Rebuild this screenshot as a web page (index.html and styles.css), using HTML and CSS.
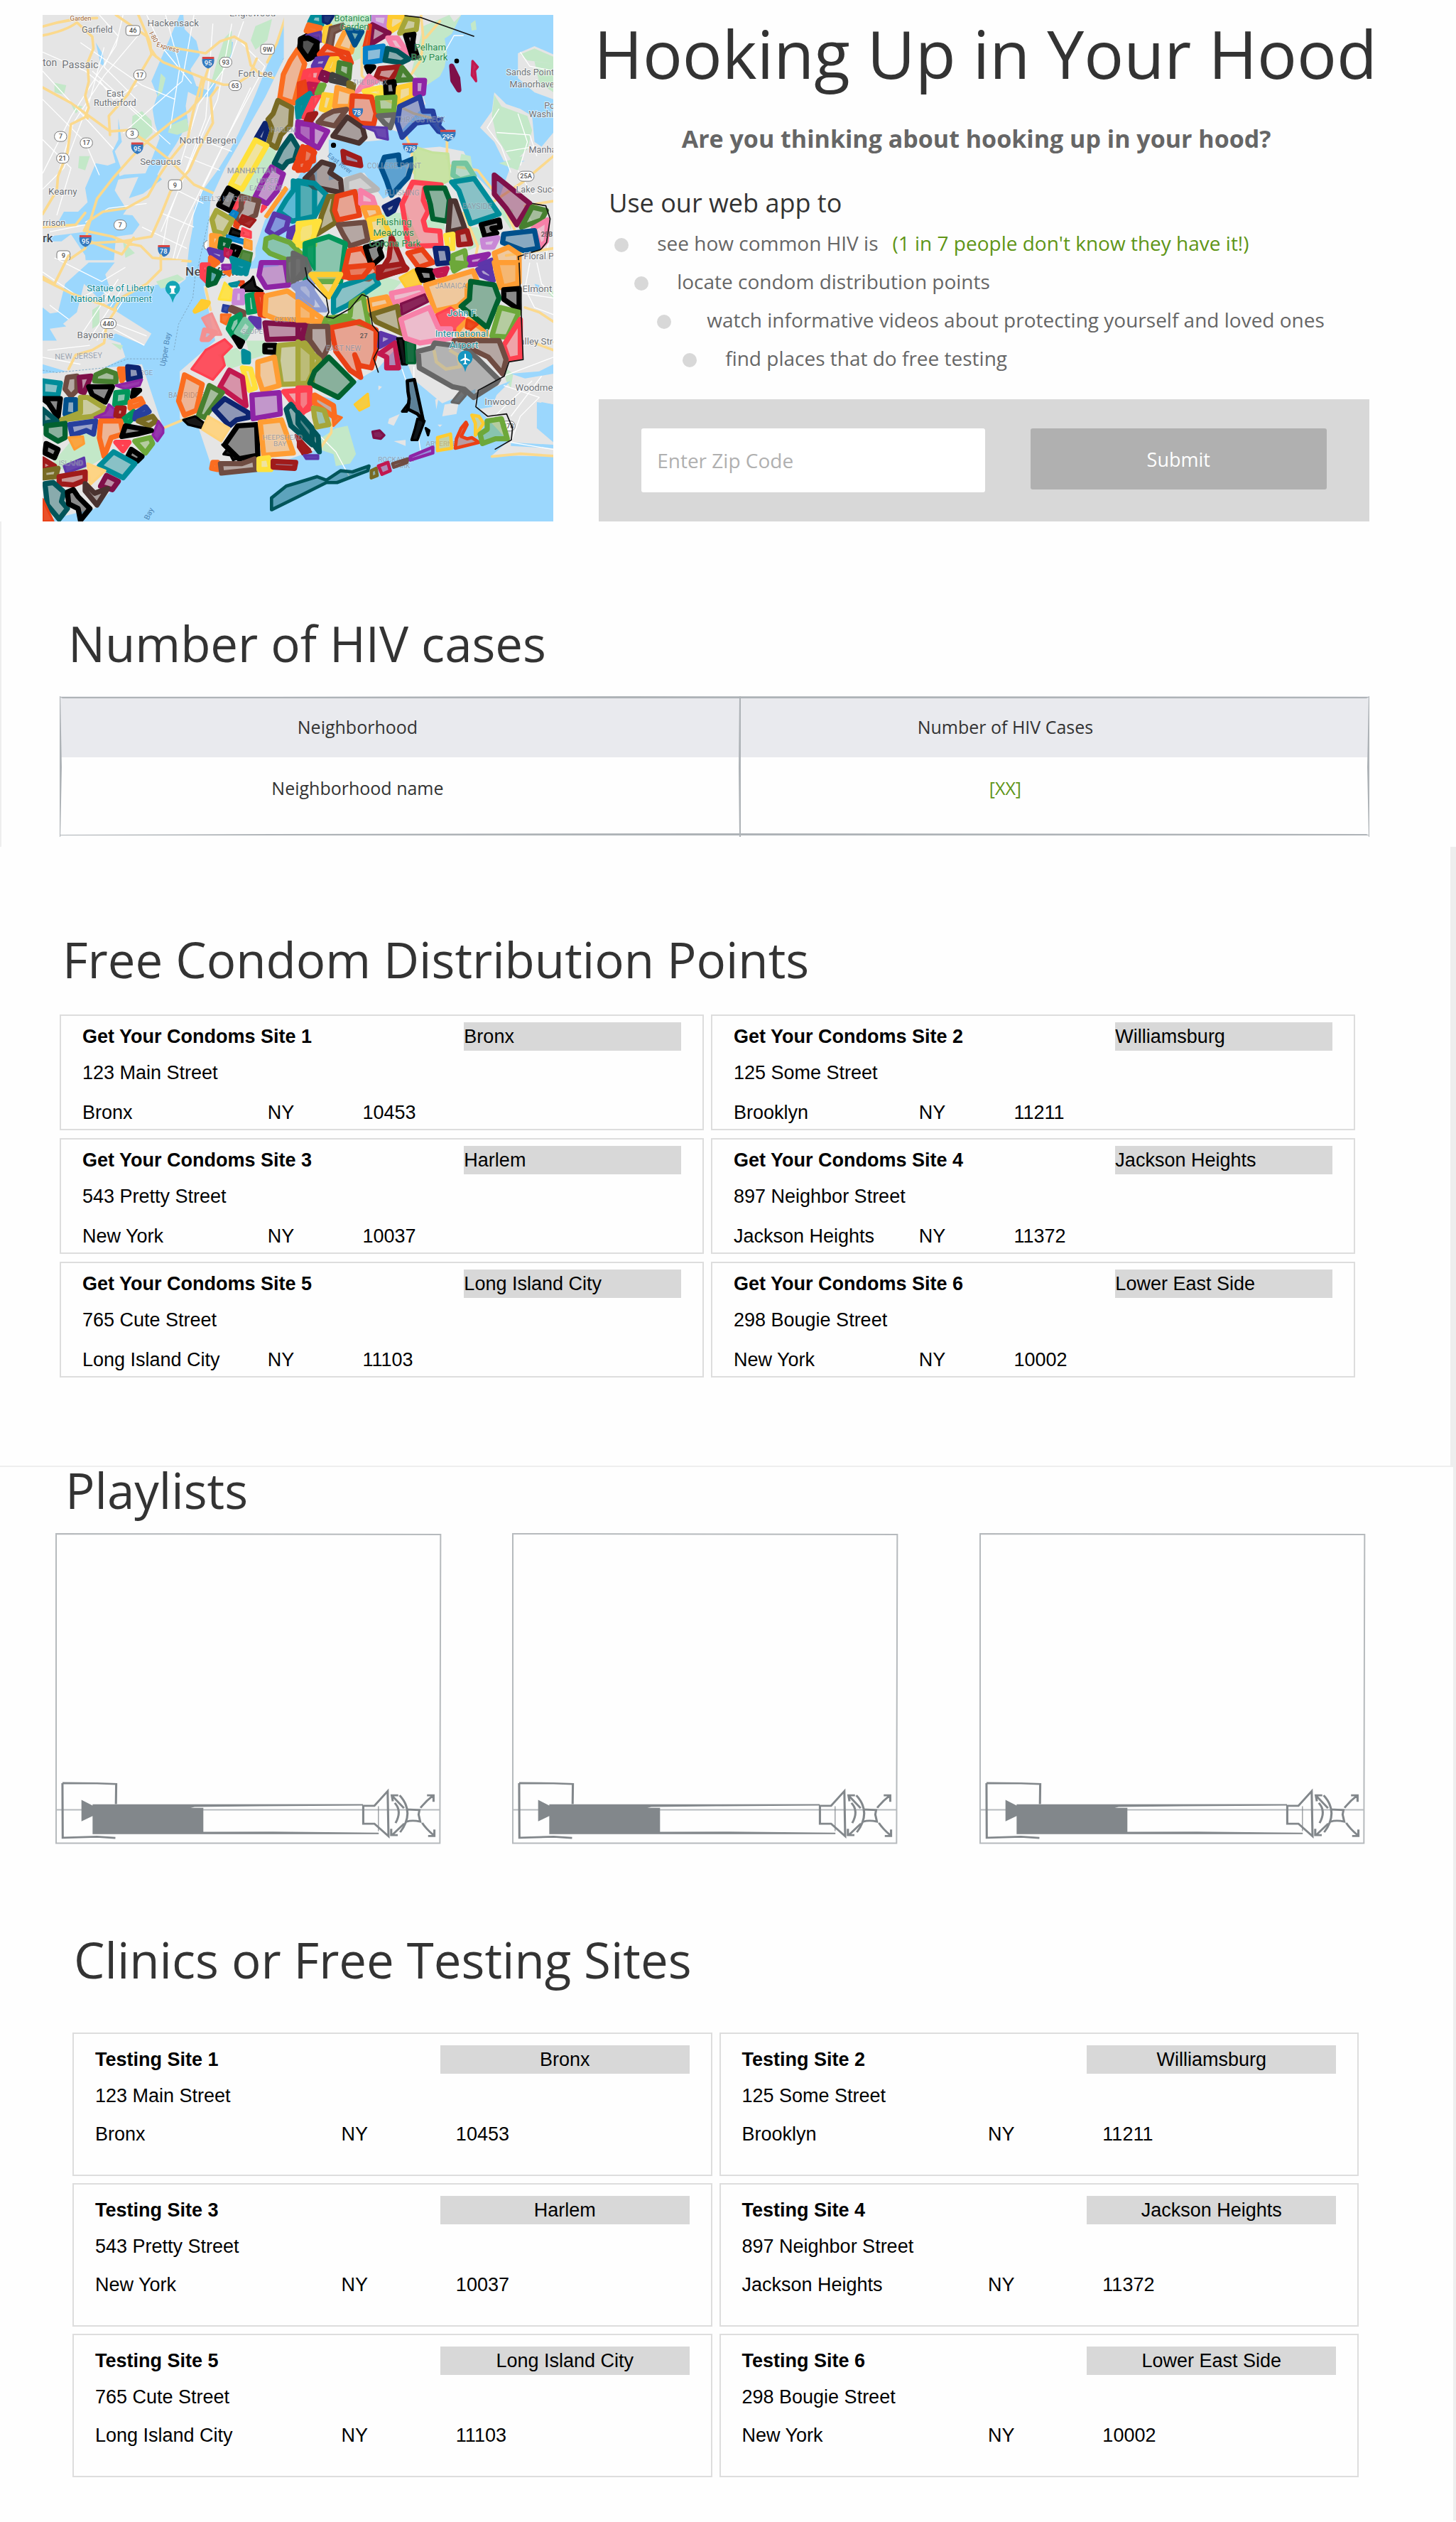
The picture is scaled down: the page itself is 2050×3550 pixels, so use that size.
FILE: index.html
```
<!DOCTYPE html>
<html lang="en">
<head>
<meta charset="utf-8">
<meta name="viewport" content="width=device-width, initial-scale=1">
<title>Hooking Up in Your Hood</title>
<link rel="stylesheet" href="styles.css">
</head>
<body>
<header class="hero">
<svg class="map" viewBox="0 0 2160 2142" role="img" aria-label="Map of New York City neighborhoods">
<rect class="water" width="2160" height="2142"/>
<!-- New Jersey, west -->
<g transform="translate(-60 -63)">
<path class="land" d="M60 63H1090L1040 200 1000 300 960 400 930 470 890 560 850 640 800 720 740 800 700 880 695 960 680 1040 665 1180 640 1200H60z"/>
<path class="water" d="M640 63h15l5 60 50 50 15 60-40 60 25 70 50 20 30-80 50-70 10-60 15 5-5 60-55 80-30 90-50 5-50-25-10 60 10 70-50 90-60 90-20 40 20 20-80 60-60 20 40-90-80 10-60 20 10-15 70-25 90-5 30-70 30-80-20-60-10-60 20-60-25-60zM285 690l50 10 40-15 10 60-20 60 50 80-40 60-60 5-60 0-90 0-40-10 25-45 60 0 40-40-10-60zM250 920l60-20 130 10 30 40-30 40-70 10-10 120-60 100-50-30-10-110-60-90-40 30-80 0 20-20 80-10 80-10zM285 180l30 50 5 50-15-10zM380 500l15 100-30 40 30 80-15 10-25-90 25-50z"/>
<path class="park" d="M440 490l40-20 40 40 5 50-40 40-50-30zM600 530l70-30 10 50-50 20-40-10zM800 250l30-90 30-30 0 90-40 90-50 50zM560 310l20 20-15 60-20 20zM960 110l70-30-20 90-50 40-20-40zM215 660l45 0-20 60-30-10zM110 350l50 10-10 40-40-10zM400 1020l50 50-40 20zM180 440l50 10-30 30z"/>
<path class="street" d="M60 220l180 80 160 130 200 180M60 300l300 330M60 420l180 180 60 140M300 63l80 90-60 130 140 140M400 63l-30 130-190 300-120 240M500 63l60 130 130 160M580 63l60 220-40 260M700 63l-50 280-250 220M780 100l-30 400-160 420-40 220M860 100l-60 320-130 300-110 260M900 180l100 100-160 300-200 400-40 160M940 370l-200 420-130 350M60 590l120 120-60 200M60 800l90-90 110-290 60-220M130 720l60-200 130-200 160-190M270 300l210 190M220 180l260 180 140 60M700 580l160 60M660 660l150 60M620 800l120 60M560 900l140 60M480 960l190 90M300 340l60 80 100-60M90 980l150-30M240 940l100-60 160-20M640 700l80-260 130-180 60-170"/>
<path class="road" d="M60 112q110-35 230-36M60 150q100-20 145-55l65 60 5 50-25 60 5 80-15 60 15 50-15 40-60 30-15 120-40 100-5 60-60 100M60 370l120 65 165 120 80-5 75 50 90 70 110 110 90 40 30 30M345 570l-5-80 80-90 100-170-5-50-60-140M370 63l130 90 20 70 50 40 165 65 90 30 50 0 60-40 30-70M600 200l150 25 60-50 60-20 50 30 20 90 30 30 95 35M760 290l-20 60-10 60-50 60-80 50-100 80-60 60-80 90-70 90-40 130-10 80-100 70-60 80M735 330l-40 150-20 100-80 100-40 60-50 90-90 50-100 15-60 40-20 40 120 25 70 30 50 10 50 50 160 15M800 370l-30 40 10 110-60 110-40 90-80 90-40 100-40 90-120 20-170 10M235 1010l160 65 50-70M60 960l140-10 40-50M1090 63l-40 120-40 80M565 1040l-10 100M240 480l10 20M520 210l20 30"/>
<text class="label" x="503" y="110" font-size="40">Hackensack</text><text class="label" x="225" y="137" font-size="38">Garfield</text><text class="label" x="850" y="68" font-size="40">Englewood</text><text class="road-name" x="176" y="88" font-size="28">Garden</text><text class="road-name" font-size="28" transform="translate(510 140) rotate(62)">I-80 </text><text class="road-name" font-size="28" transform="translate(540 196) rotate(16)">Express</text>
<text class="label" x="60" y="278" font-size="42">ton</text><text class="label" x="142" y="287" font-size="44">Passaic</text><text class="label" x="887" y="323" font-size="40">Fort Lee</text><text class="label" x="330" y="408" font-size="38">East</text><text class="label" x="276" y="446" font-size="38">Rutherford</text><text class="label" x="638" y="608" font-size="41">North Bergen</text><text class="label" x="472" y="696" font-size="40">Secaucus</text><text class="label" x="84" y="824" font-size="40">Kearny</text><text class="label" x="60" y="955" font-size="38">rrison</text><text class="city" x="60" y="1024" font-size="50">rk</text>
<g class="shield"><rect x="412" y="108" width="60" height="42" rx="12"/><rect x="982" y="187" width="58" height="42" rx="12"/><rect x="808" y="242" width="52" height="42" rx="20"/><rect x="445" y="296" width="52" height="42" rx="20"/><rect x="848" y="341" width="52" height="42" rx="20"/><rect x="413" y="544" width="52" height="42" rx="20"/><rect x="110" y="556" width="52" height="42" rx="20"/><rect x="219" y="583" width="52" height="42" rx="20"/><rect x="119" y="648" width="52" height="42" rx="20"/><rect x="592" y="760" width="56" height="44" rx="12"/><rect x="362" y="930" width="52" height="42" rx="20"/><rect x="120" y="1060" width="56" height="42" rx="12"/><rect x="342" y="1104" width="66" height="42" rx="20"/><rect x="1088" y="242" width="52" height="42" rx="20"/><rect x="986" y="465" width="52" height="42" rx="20"/><rect x="742" y="1016" width="50" height="42" rx="20"/></g>
<g class="shield-text"><text x="442" y="139">46</text><text x="1011" y="218">9W</text><text x="834" y="273">93</text><text x="471" y="327">17</text><text x="874" y="372">63</text><text x="439" y="575">3</text><text x="136" y="587">7</text><text x="245" y="614">17</text><text x="144" y="679">21</text><text x="620" y="792">9</text><text x="388" y="961">7</text><text x="148" y="1091">9</text><text x="375" y="1135">440</text><text x="1114" y="273">9A</text><text x="1012" y="496">9A</text></g>
<g class="interstate"><path d="M735 248h50q5 30-25 42-30-12-25-42zM435 609h50q5 32-25 43-30-12-25-43zM216 1001h50q5 32-25 43-30-12-25-43zM548 1043h50q5 32-25 43-30-12-25-43z"/></g>
<g class="interstate-top"><path d="M735 240h50v9h-50zM435 602h50v9h-50zM216 994h50v9h-50zM548 1036h50v9h-50z"/></g>
<g class="interstate-text"><text x="760" y="276">95</text><text x="460" y="639">95</text><text x="241" y="1029">95</text><text x="571" y="1071">78</text></g>
<path class="ferry" d="M1150 63L960 560 780 850 710 1160"/>
<path class="land" d="M1170 63h100v700l-240 190-80 150-180 40-15-100 15-200 60-130 170-300z"/>
<path class="park" d="M1000 640l40-30 10 60-20 40-90 130-60-30z"/>
<path class="water" d="M1200 640l-60 110-140 180-40 120 0 110h260V640z"/>
</g>
<!-- Bronx, Queens and Long Island, base layer -->
<g transform="translate(1080 -63)">
<path class="land" d="M-60 63H640L600 120 560 160 540 200 600 250 540 300 520 380 540 440 430 560 370 540 380 590 270 600 130 590 20 500-60 500z"/>
<path class="park" d="M530 110l110-47h50l-40 80-30 20 10 60-10 60-20 40-60 40-60-60 20-80zM730 100l20-15 5 40-20 5zM230 63h80l-20 170-60 30zM120 63h100v60H90z"/>
<path class="land" d="M830 390l50 50 60 20 50 30 10 110 30 20 50-60V1150H0V790L280 730 360 840 440 800 480 630 600 620 700 640 760 750 850 840 900 700 960 680 870 680 830 600 770 540 820 470zM930 225l70-30 80 35V420l-80-30-70-60zM640 63l50 0-30 30z"/>
<path class="park" d="M830 400l30 50 110 40 20 60-20 80-60 60-70-110-20-90zM940 230l60-25 80 35v30l-110-15zM1000 260l80 10v120l-60-40zM850 690l100-30-20 60zM690 650l40 10 10 70-60-30zM540 930l80-10 0 50-80 0zM700 960l60 0 40 60-80 40zM850 850l60 40-10 80-40-60zM330 900l130 0 60 130-150 30z"/>
<path class="street" d="M940 220l40 60 100 20M850 460l-50 80 60 80 40 110M840 560l140 10 30 90M930 480l40 120-30 100M880 640l120-20M620 220l40-70 40 0M930 720l60 100 90-30M960 900l100 120-20 120"/>
<path class="road" d="M520 63l10 100-10 90-40 60M270 200v120l100 100 120 60 80 20 60 80 0 90M450 560l30 70 10 100M600 90l-60 70M640 700l120 20 100 130 60 130M830 850l120-80 130-110M960 870l120-20M700 900l60 140-20 100M1080 1050l-200 30"/>
</g>
<!-- Staten Island, New Jersey shore and Brooklyn, base layer -->
<g transform="translate(-60 1047)">
<path class="land" d="M60-10H650L600 50 560 90 430 120 330 180 520 300 490 350 370 300 330 320 390 340 410 400 310 450 160 460 60 430V330l60 0-30-50 70-10-100-80zM60 470L480 430 570 700 400 910 280 1040 60 1094zM640 460L790 330 740 100 900 30 1220 0V790L960 880 780 880 720 700 640 660z"/>
<path class="water" d="M255 0h110l-40 50 20 60-50 40-60-60-30 120-60 50-80-40 60-10 30-120z"/>
<path class="park" d="M540 80l90-30 30 20-60 30-40 10zM270 200l30-20 0 80-30 20zM350 340l50 10-10 20zM200 730l90-20 20 120-120 70-90-50zM800 390l80-30 60 60-90 30zM920 330l80 0 0 60-60 20z"/>
<path class="street" d="M60 40l160 110 80-40 80 60M110-20l200 100 100-60M260 320l150-230M220 310l160-240M290 330l130-200M360 280l130 70M370 260l130 50M90 180l80 60M80 370l180-20M60 400l160 30"/>
<path class="road" d="M60 60l50 30 60-120M60 70l120 60 140 50 40 20 30-50 110-60 60-60 0-60M370 200l-40 60-10 80-50 30-70 20-30 60M570 700l120-50 60-100M750 110l20 90"/>
<path class="ferry" d="M60 455l60 10 200-20 100-38h150M705 60l-10 90-60 110-20 110"/>
<text class="place" x="247" y="121" font-size="39">Statue of Liberty</text><text class="place" x="178" y="166" font-size="39">National Monument</text>
<path class="place-pin" d="M610 170q-8-30-24-42a31 31 0 1 1 48 0q-16 12-24 42z"/><path class="pin-glyph" d="M597 98h26v8l-6 4v16l8 6h-30l8-6v-16l-6-4z"/>
<text class="label" x="206" y="319" font-size="40">Bayonne</text><text class="area" x="112" y="410" font-size="34" transform="rotate(-2 112 410)">NEW JERSEY</text><text class="area" x="470" y="475" font-size="30">RGE</text><text class="area" x="592" y="573" font-size="31">BAY RIDGE</text>
<text class="sea" font-size="32" transform="translate(577 440) rotate(-80)">Upper Bay</text><text class="sea" font-size="32" transform="translate(508 1090) rotate(-65)">Bay</text>
<g class="shield"><rect x="305" y="237" width="66" height="42" rx="20"/></g><g class="shield-text"><text x="338" y="268">440</text></g>
<text class="city" x="664" y="56" font-size="52">New York</text>
</g>
<!-- Jamaica Bay and Nassau, base layer -->
<g transform="translate(1080 1047)">
<path class="land" d="M-80-20H1080V600l-70-10 0 110 70 60v60L820 815l70-60-140-150 0-70-140 60-120-100-60-150-90 100-120 70-80 60-80-20-40 80-60 60-80-20z"/>
<path class="land" d="M340 520l15 5-15 15zM385 660l45-20-25 50-25-10zM620 600l60-10-10 50-60 10zM580 580l15-10-10 50zM405 755l50-5 0 25zM590 685l20 0-10 10zM440 750l40-10"/>
<path class="park" d="M100 740l60-40 50-10 35 120-25 40-60 10-10-50-60-20zM870 440l40 30-10 60-20-30zM280 110l80-50 80 20-60 60-90 10zM1040 110l40 10v30z"/>
<path class="water" d="M1080 430l-60 30-120 10 60 20 120-20zM900 500l-60 60-20 50-60 10-10-60zM1080 600l-50-10-20 40 30 40 0-50 40 0zM900 760l180 10v15l-180-10zM1000 90l20 5 0 40z"/>
<path class="street" d="M980 0l-20 110 40 80 80 30M950 130l130 20M1010 0l20 90 50 50M870 480l210-80M870 520l150 50-80 80-40 110 180 30M990 500l-170 160M1030 480l-130 170M80 720l80 80 60 110M440 450l20 60M490 440v60M510 740l10 70"/>
<path class="road" d="M960 190l60 20 60 40M1000 340l80 30M90 790l50-70 10-110M820 820l120-12 140 10"/>
<text class="label" x="949" y="123" font-size="40">Elmont</text><text class="label" x="936" y="347" font-size="40">alley Stream</text><text class="label" x="919" y="543" font-size="40">Woodmere</text><text class="label" x="789" y="602" font-size="40">Inwood</text>
<g class="shield"><rect x="860" y="670" width="58" height="42" rx="20"/></g><g class="shield-text"><text x="889" y="701">878</text></g>
<text class="area" x="338" y="841" font-size="30">ROCKAWAY</text><text class="area" x="400" y="869" font-size="30">PARK</text><text class="area" x="540" y="777" font-size="30">ARVERNE</text>
</g>
<!-- Neighborhood zones, Manhattan -->
<g class="zones" transform="translate(-60 -63)">
<path class="orange solid" d="M1180 110l40 0 0 50-45-15z"/>
<path class="black" d="M1150 165l30-15 40 10v70l-30 18-35-25-5-25z"/>
<path class="orange" d="M1138 210l30 60-20 70-25 95-60-20 15-100 30-60z"/>
<path class="redorange solid" d="M1135 440l10-60 20-50 30 10 10 50-30 50z"/><path class="red solid" d="M1165 300l35-10v60l-45-10z"/><path class="teal solid" d="M1130 450l50-30 25-30v100l-70 10z"/><path class="red solid" d="M1160 500l40-90v100z"/>
<path class="olive" d="M1055 425l58 30-5 75-40 40-20 55-32-20 15-60-18-40 22-25z"/>
<path class="navy" d="M1000 522l-35 60 28 18 15-50z"/>
<path class="darkteal" d="M1110 575l30 50-15 50-30 10-20 25-35-20 30-60z"/>
<path class="purple" d="M1140 515l60 10v90l-40-30-25-20z"/>
<path class="redorange" d="M1165 625l40-5v60l-30 10-10 30-40-10 10-25 25-5z"/>
<path class="yellow" d="M960 592l48 24-105 184-48-20z"/>
<path class="purple" d="M1028 706l50 30-25 70-45 55-50-28 35-70z"/>
<path class="black" d="M845 795l40 22-30 75-50-25z"/><path class="red solid" d="M890 835l25 10-20 50-28-10z"/><path class="brown" d="M900 830l75 20-15 60-80 40 0-40 20-30z"/><path class="skyblue solid" d="M865 890l20 10-10 20-25-10z"/><path class="darkred solid" d="M905 910l55 20-25 30-45-20z"/><path class="red solid" d="M990 870l15 5-20 20z"/>
<path class="khaki" d="M795 890l68 40-35 60-40-12-12-50z"/><path class="amber solid" d="M1086 792l8 8-85 118-8-4z"/>
<path class="redorange solid" d="M875 935l15 15-5 15-15-10z"/><path class="black solid" d="M860 965l50 20-20 15-40-10z"/><path class="red solid" d="M905 965l35 15 0 25-40-10z"/><path class="skyblue solid" d="M840 995l70 20 0 15-70-20z"/><path class="amber" d="M775 995l35 5-20 45-15-5z"/><path class="darkgreen" d="M815 1010l35 10-15 35-25-10z"/><path class="black" d="M865 1040l30 10-15 30-20-10z"/><path class="amber solid" d="M915 1010l28 10 0 35-30-10z"/><path class="forest solid" d="M905 1060l40 10-8 42-45-15z"/><path class="indigo" d="M765 1055l60 15-10 30-40-20z"/><path class="crimson solid" d="M830 1050l30 10-10 30-20-10z"/><path class="orange" d="M770 1090l30 20-20 15-10-10z"/><path class="teal" d="M860 1092l70 25-10 40-50-30z"/>
<path class="teal" d="M1120 765l90 20v130l-95 20-55-40 30-50 30-40z"/><path class="indigo" d="M1040 905l60 20-10 40-50 30-30-20z"/><path class="indigo" d="M1105 970l25-10-10 45-20-5z"/><path class="yellow" d="M1150 950l60-15v100l-60 5-25-20z"/>
<path class="green solid" d="M1170 1040l40-10v110l-40-60z"/><path class="lime" d="M1005 1010l30-10 70 25 50 50-60 25-75-30-20-20z"/><path class="brown" d="M1200 745l-25 15 30 20z"/>
</g>
<!-- Neighborhood zones, Bronx and Queens -->
<g class="zones" transform="translate(1080 -63)">
<path class="teal" d="M65 63l35 0 0 40-50-10z"/><path class="navy solid" d="M105 63h48l-25 40-22-10z"/><path class="orange" d="M45 105l50 12-15 28-45-15z"/><path class="indigo solid" d="M35 150l60-15 10 40-40 0z"/><path class="gold solid" d="M110 115l30-10-20 80-15-10z"/><path class="brown solid" d="M135 115l55-15-5 25-30 15-10 60-25-10z"/>
<path class="amber" d="M205 120l30 60-10 40-60-20z"/><path class="blue" d="M210 125l60 10-30 55z"/><path class="lavender" d="M315 63h65l-10 50-50-15z"/><path class="gold" d="M390 68l60 5-5 25-50 32-10-20z"/><path class="khaki" d="M460 75l45 10-5 40-70 15z"/>
<path class="maroon" d="M315 105l70 35-80 48z"/><path class="redorange solid" d="M300 105l8 0-10 90-20 0z"/><path class="pink" d="M380 160l40 0 45 65-60-20z"/><path class="black" d="M455 150l35-5-5 35 20 60-20 5z"/>
<path class="black" d="M12 165l30-5 40 20-40 70-35-50z"/><path class="redorange" d="M120 195l50 20 40 10 15 40-50-30-85-5z"/><path class="indigo" d="M80 250l45-5-15 35-45 0z"/><path class="gold" d="M140 250l25-2-20 55-25-10z"/><path class="forest" d="M175 265l45 10-5 55-45-25z"/><path class="skyblue" d="M285 205l75-10-5 60-70 10z"/><path class="darkteal" d="M378 205l40 10 50 35-30 15-70-10z"/>
<path class="red" d="M40 300l55-5-10 45-60-5z"/><path class="maroon" d="M105 305l25 10-10 25-25-10z"/><path class="charcoal" d="M145 315l60 25 0 15-65-15z"/><path class="crimson" d="M45 355l40 5-15 30-20-10z"/><path class="lime" d="M95 360l15 0-20 45-10-10z"/><path class="olive" d="M215 350l20 10-5 25-15-10z"/><path class="black" d="M290 283l30 0-20 22z"/><path class="darkred" d="M345 290l85-8-40 60-60-15z"/><path class="forest" d="M440 285l40 50-60 5z"/>
<path class="pink solid" d="M300 315l40 30-100 50 20-30z"/><path class="yellow" d="M280 385l70-15 10 40-70-10z"/><path class="black" d="M370 350l35-5 8 50-40 3z"/><path class="gold" d="M425 370l55-12 0 50-60 30z"/><path class="purple" d="M495 340l40 0-5 55-35 2z"/><path class="redorange solid" d="M0 350l30-10 10 60-40 40z"/>
<path class="teal" d="M0 430l50-35-30 80-20 10z"/><path class="red solid" d="M60 410l35-5-45 80-30 10z"/><path class="gold" d="M110 400l38 5-20 65-30-10z"/><path class="amber" d="M165 370l65 20-10 60-65 0z"/><path class="redorange" d="M230 405l80 5 20 70-10 45-60-5-35-40z"/><path class="lime" d="M335 415l75-5-5 60-65 0z"/><path class="gray" d="M340 490l70-5-20 55-25-20z"/>
<path class="brown" d="M110 490l40-20 55-8-50 70-70-15z"/><path class="darkred" d="M45 485l30-5-20 30-20 0z"/><path class="darkbrown" d="M208 495l65 45 10 40-25 25-110-30z"/><path class="purple" d="M0 520l65 10 60 25-40 70-85-50z"/><path class="indigo solid" d="M275 535l100 5 5 50-45-10-10-25z"/>
<path class="royal" d="M430 450l85-40 15 60 40 0 10 40-80 10-60 60-20-60z"/><path class="royal solid" d="M550 510l60-10-10 30 50 50-60-20z"/>
<path class="maroon" d="M650 280l25 50 5 50-25-40z"/><path class="crimson solid" d="M738 258l22 25-12 15 5 45-18-25z"/><circle class="black solid" cx="150" cy="614" r="6"/><circle class="black solid" cx="671" cy="258" r="5"/>
<path class="redorange" d="M20 620l50 25-30 70-40 5v-50z"/><path class="darkred" d="M190 640l70 30 5 30-70-15z"/><path class="silver" d="M205 760l60-20 70 60-40 10-90 0z"/><path class="darkbrown" d="M100 685l50 15-15 30 45 30 5 55-120-25-35-35z"/>
<path class="blue" d="M365 665l60-10 5 40 60-25-25 80-70 75-20-60-25-60z"/><path class="mint solid" d="M490 620l80 25 65 5 10 110-30 15-120-15z"/><path class="seafoam" d="M660 690l50 0 35 55-60 15-30-20z"/>
<path class="teal" d="M0 765l70 10 50 50-50 90-70 20z"/><path class="olive" d="M130 830l25 0-10 60 15 50-80 50 20-80z"/><path class="redorange" d="M165 830l75-20 20 100-90 20-15-40z"/><path class="pink" d="M265 805l50 30 10 30-60-5z"/><path class="amber" d="M275 878l60 0 10 30-50 20z"/><path class="gold" d="M300 930l55-12 30 65-70 25z"/><path class="navy" d="M365 875l60-30-20 45-25 15z"/>
<path class="red" d="M485 770l120 12-70 15-5 50 20 45-20 40 10 40 60 5 5 60-140 5-10-90-15-90z"/><path class="darkgreen" d="M540 795l80 0 20 50-10 90-60-10-10-60z"/><path class="darkbrown" d="M645 850l20 0 40 115-70 15z"/><path class="teal" d="M650 770l95-15 105 150-120 40-50-140z"/>
<path class="maroon" d="M830 740l150 120-55 90-45-70-50-60z"/><path class="forest" d="M990 875l60 15-20 40-85 30z"/><path class="pink" d="M1055 930l-5 90-25 25-30-80z"/><path class="blue" d="M870 990l130-15 15 75-60 10-90-35z"/><path class="black" d="M775 950l75-20 5 30-35 5 20 20-50 15z"/>
<path class="yellow" d="M0 945l90-10-30 80-60 20z"/><path class="brown" d="M170 950l110-10 15 75-75 25-30-50z"/><path class="darkred" d="M675 985l40-10 15 55-50 5z"/><path class="yellow" d="M625 995l30-5 0 60-20 0z"/><path class="lavender" d="M780 1015l65-10-20 40-40 0z"/>
<path class="green" d="M30 1030l100-30 70 30-10 80-10 80h-150z"/><path class="gray" d="M-20 1070l40 20 0 60-40 50z"/><path class="redorange" d="M215 1060l55-10 70 100-40 30-110-10z"/><path class="black" d="M285 1045l70-20-10 30 10 30-45 40z"/><path class="darkred" d="M395 1000l60 140-120 30 50-80z"/><path class="redorange" d="M465 1070l60-15 45 55-60 20z"/><path class="navy" d="M580 1050l50 0 10 60-50 5z"/><path class="lime" d="M655 1080l50-20 10 60-60 15z"/><path class="purple" d="M725 1090l80-15-40 40-40 5z"/><path class="indigo" d="M770 1120l50-20-10 50z"/><path class="amber" d="M830 1070l60-25 45 30 0 120-70 20z"/>
<path class="thin" d="M450 66l70 8 225 80M990 860l58 10 18 55-15 100-25 30-95 30 8 70"/>
</g>
<!-- Neighborhood zones, Staten Island and west Brooklyn -->
<g class="zones" transform="translate(-60 1047)">
<path class="teal" d="M60 500l75 10-10 50-65-5z"/><path class="brown" d="M165 485l40-5 0 60-25 25-25-30z"/><path class="maroon" d="M215 485l50-5-30 70-15-5z"/><path class="forest" d="M285 475l45-20 40 15 0 35-90-5z"/><path class="orange" d="M385 450l20 0 5 30-15 20z"/><path class="navy" d="M420 440l45 5 8 40-50 10z"/><path class="purple solid" d="M370 520l110-25-10 25-60 15z"/>
<path class="black" d="M255 525l100 0-30 65-55-30z"/><path class="green" d="M370 550l50-5-5 45-50 10z"/><path class="black" d="M445 540l25 0-30 28z"/><path class="black" d="M60 575l75 0-10 80-40-60z"/><path class="blue" d="M160 580l40 0 0 65-45-5z"/><path class="khaki" d="M220 570l30 0 80 50-60 30-130 15 80-30z"/><path class="purple solid" d="M340 600l25 20-5 35-80 0 45-20z"/><path class="darkred" d="M375 615l30 0-5 35-30-3z"/><path class="orange" d="M430 590l45-15 10 20-55 20z"/>
<path class="green" d="M405 660l40-30 5 20-30 30z"/><path class="royal" d="M455 635l40-25 15 20-60 30z"/><path class="olive" d="M465 670l60-20 15 20-30 20z"/><path class="purple solid" d="M550 670l20 30 0 20-25 35-20-25z"/>
<path class="darkteal" d="M60 620l60 50-60 10z"/><path class="darkgreen" d="M75 690l80-10 0 60-30 15-50-30z"/><path class="royal" d="M175 685l110-15-10 55-30-15-60 20z"/><path class="orange" d="M305 670l85 0 10 55-50 15-30 80-20-80z"/><path class="amber solid" d="M170 740l60-5 5 30-40 25z"/><path class="black" d="M410 690l110 20-60 15-65 10z"/><path class="red" d="M370 760l55 0-25 35z"/><path class="lime" d="M450 755l65-15 10 25-30 40z"/><path class="black" d="M435 790l45 30-20 20-40-20z"/>
<path class="black" d="M75 765l50 25-15 35-40-20z"/><path class="teal" d="M360 800l90 50-50 60-100-50z"/><path class="indigo solid" d="M150 860l85-35 5 35-80 30z"/><path class="gold-soft solid" d="M250 850l75 30-65 60z"/><path class="darkred" d="M60 830l50 30-50 20z"/><path class="olive" d="M65 880l60-10-10 35-50 5z"/><path class="darkred" d="M130 905l110-20 0 35-50 20-60-5z"/><path class="maroon" d="M330 900l50 25-25 35-50-15z"/>
<path class="darkteal" d="M70 935l35-5 45 40-10 40 25 30-35 45-50-60z"/><path class="redorange solid" d="M60 1000l45 94h-45z"/><path class="black" d="M190 960l20 30 50 50-40 50-10-50-40-20-5-50z"/><path class="darkbrown" d="M240 935l40 40 55-20-45 70-50-60z"/>
<path class="red" d="M735 10l25 0-5 70-20-20z"/><path class="darkgreen" d="M765 25l45 20-20 40-30 10z"/><path class="purple solid" d="M820 10l40 0-10 25-30-10z"/><path class="orange solid" d="M825 40l35-5-10 20z"/><path class="teal" d="M870 0l60 10-30 35-30-5z"/><path class="redorange solid" d="M890 80l20 0 0 20-20-5z"/><path class="teal solid" d="M850 90l40-8-10 18-30 0z"/><path class="black solid" d="M900 105l40-30 10-15 10 40 30 20-90 0z"/>
<path class="purple" d="M985 0l100 0 15 95-95 10-30-50z"/><path class="gray solid" d="M1095-20l80 0 20 50-40 40-60 10z"/><path class="periwinkle" d="M1120 100l80-25 0 100z"/><path class="yellow solid" d="M830 85l30 30-5 45-50-5 15-40z"/><path class="gold" d="M705 205l30-40 25 5-10 15z"/><path class="lavender" d="M875 120l30 0 0 50-35 0z"/><path class="green" d="M925 140l25-5 10 70-30 5z"/><path class="redorange" d="M965 135l25 0 10 90-20-5z"/><path class="amber" d="M1005 140l90-20 105 75v50l-150-5-50-20z"/><path class="royal solid" d="M825 180l25 5-10 25-20-5z"/><path class="brown" d="M860 190l50 20 0 15-55-25z"/>
<path class="salmon solid" d="M735 235l40-20 40 90-40 0z"/><path class="salmon" d="M745 285l45 10-30 30-25 0z"/><path class="orange solid" d="M815 220l40 0-20 40-20-10z"/><path class="green" d="M860 240l35-20 0 40-30 50-20-30z"/><path class="seafoam" d="M915 240l30 30-30 50-35-25z"/><path class="indigo" d="M940 235l35 5 0 35z"/><path class="maroon" d="M1000 255l180 10-15 55-155 5z"/><path class="brown" d="M1190 270v70l-10-10z"/><path class="black" d="M870 315l35 20-10 20z"/>
<path class="red solid" d="M690 450l60-80 80-45 30 30-40 40 10 40-50 60-50-25z"/><path class="black" d="M1000 350l45 0 0 30-45-3z"/><path class="teal" d="M910 375l20 10 0 35-18 0z"/><path class="khaki" d="M1060 350l110-10 30 30v140l-130 5-15-100z"/><path class="yellow" d="M905 445l35 5 20 80-25 10z"/><path class="amber" d="M970 420l70-20 20 120-70 20-20-60z"/><path class="crimson" d="M850 455l55 30 15 120-110-80z"/>
<path class="orange" d="M660 475l75 40-25 110-50 20-25-60z"/><path class="forest" d="M765 520l55 30-75 105-25-10z"/><path class="navy" d="M830 575l100 60 0 20-50 10-30 25-65-70z"/><path class="purple" d="M945 560l115-10 5 90-115 20z"/><path class="red" d="M1080 545l110-8v80l-40 20z"/><path class="black solid" d="M655 665l50-15 40 30-10 20-60-15z"/><path class="gold-soft solid" d="M760 650l90 50-35 55-80-50z"/><path class="black" d="M885 690l80-5 5 130-80 15-60-60z"/><path class="darkteal" d="M1090 620l20-20 90 100 0 70-90-80z"/><path class="amber" d="M980 675l90-10 50 140-125 10z"/><path class="darkred solid" d="M1130 730l60 60-30 20z"/>
<path class="orange" d="M780 845l20 0 0 30-25-5z"/><path class="brown" d="M812 850l90 0 55-20 5 45-145 15z"/><path class="yellow" d="M975 830l40-5 10 50-50 0z"/><path class="darkred" d="M1035 840l95 5-5 25-90-5z"/>
<path class="black solid" d="M820 770l20 20-15 20 30 5 10 20 30-10z"/>
</g>
<!-- Neighborhood zones, east Brooklyn, south Queens and the Rockaways -->
<g class="zones" transform="translate(1080 1047)">
<path class="gold" d="M55 50l125 0-50 95z"/><path class="teal" d="M180 100l140-45 20 35-60 40-70 50-60 30 0-60z"/><path class="periwinkle" d="M0 90l40 0 75 110-60 0-55-50z"/><path class="amber" d="M0 165l100 70 0 15-100-5z"/><path class="lime" d="M225 170l50-30 25 130-80-25-110 15 10-25 100-10z"/><path class="redorange" d="M205 20l110-10-40 50-60 5z"/><path class="darkred" d="M340 20l100-15 20 20-120 40z"/>
<path class="gold solid" d="M430 65l60-35 30 60-60 20z"/><path class="pink" d="M395 130l120-25 30 20-100 35-45 10z"/><path class="amber" d="M300 160l75-15 15 35-85 20z"/><path class="olive" d="M310 220l110-35 20 115-110-50z"/><path class="maroon solid" d="M435 175l100-40 15 30-110 55z"/><path class="black" d="M505 30l60 5 5 40-45 0z"/><path class="crimson" d="M580 35l50-10-10 25-30 5z"/><path class="lime" d="M650 0l60 5-50 30z"/><path class="indigo" d="M760 30l50-15 15 60-50-20z"/>
<path class="amber" d="M540 95l200-60 15 35-40 30 0 50-40 35-95 20z"/><path class="amber" d="M830 0l100 0 0 90-75 15z"/><path class="black" d="M870 115l65-5 0 90-65-45z"/>
<path class="red solid" d="M585 220l60-30 65 50-30 50-80-10z"/><path class="amber" d="M680 280l40-40 75 50 0 20-115 0z"/><path class="redorange solid" d="M715 240l45 20-30 25-20-10z"/><path class="darkgreen" d="M730 80l100 15 20 55-50 125-110-90 35-30z"/><path class="lime" d="M855 190l80 20-50 105-65-5z"/>
<path class="redorange" d="M140 275l120-25 70 35 0 90-20 70-50-10-20-45 25 95-45-30-60-80z"/><path class="brown" d="M50 270l75 0 5 80-25 55-65-90z"/><path class="maroon" d="M0 265l30 0-15 55-15 0z"/><path class="khaki" d="M0 335l90 75-50 100-40 5z"/><path class="darkgreen" d="M130 400l105 105-65 65-120-60 20-50z"/><path class="indigo" d="M350 300l60 20-65 35z"/><path class="crimson" d="M345 385l65-45 15 105-50 0 0-45z"/><path class="black solid" d="M420 320l25 0 15 110-20 0z"/><path class="darkgreen solid" d="M455 335l40-5 0 95-35 0z"/>
<path class="pink" d="M435 240l120-50 40 90 50 0 0 40-130 20-60-20z"/><path class="red" d="M940 240l0 160-50 10-20-60z"/><path class="brown" d="M660 330l190 0 30 80-15 60-60-70z"/>
<path class="gray" d="M508 375l60-15 10-20 120 15 60 50 90 90-10 15-95 60-40-35-50-10-140-80z"/><path class="gray solid" d="M690 540l20 20-30 35-30-5z"/>
<path class="red" d="M0 530l50 0 0 70-30 35-20-30z"/><path class="orange" d="M70 560l80 45 5 50-85-60z"/><path class="khaki" d="M65 615l45 10 20 60-50 10-10-40z"/><path class="orange solid" d="M145 640l40 15-35 35z"/><path class="darkteal" d="M0 635l85 100 5 65-90-120z"/><path class="darkred solid" d="M0 735l55 65-35 10-20-30z"/><path class="indigo solid" d="M25 815l60 0 0 15-50 0z"/>
<path class="gold solid" d="M240 600l55-45 5 50-40 20z"/><path class="maroon solid" d="M315 715l30-5 20 20-15 15-30-5z"/><path class="black narrow" d="M462 500l30-5 38 175-25-30-40-20 5-45-5-30z"/><path class="black solid" d="M505 660l30 10-30 80-25 0 15-50zM540 700l15 10-5 20zM440 630l30-40-10 40z"/>
<path class="darkteal narrow" d="M-112 995l0 50 112-55 120-60 45 0 130-50 5-20-70 25-50-5-60 40-40-15-80 25-50 15z"/><path class="olive narrow" d="M310 880l20-10 5 30-25 10z"/><path class="crimson narrow" d="M340 860l40-15 10 35-35 15z"/><path class="brown narrow" d="M400 850l65-20-5 15-55 20z"/><path class="purple narrow" d="M475 820l95-40 0 25-95 30z"/><path class="gold narrow" d="M590 740l55-15 5 60-60 10z"/><path class="redorange narrow" d="M690 700l20-25 5 10-25 50 25 10 20-5 30 20-100 25 5-40z"/><path class="gold narrow" d="M735 645l30 5 20 30-35 50 0-50z"/><path class="lime" d="M800 670l60-10 25 85-50 0-55 20-10-40 30-20z"/>
<path class="thin" d="M30 20l10 50 80 80 10 60-10 20 30 5 70-40 50-60 25 10 20 120 25 30 0 70-20 40 20 60M935 0l5 120 12 290-60 10-20 60-110 60-10 70 50 40 80-10 25 60-5 50-70 40"/>
</g>
<!-- Names and pins printed over the zones -->
<g transform="translate(-60 -63)"><text class="area strong" x="840" y="733" font-size="34">MANHATTAN</text><text class="area" x="964" y="774" font-size="30">UPPER</text><text class="area" x="934" y="806" font-size="30">EAST SIDE</text><text class="area" x="720" y="849" font-size="30">HELL'S KITCHEN</text><text class="area" x="1025" y="558" font-size="27">HARLEM</text></g>
<g transform="translate(1080 -63)"><text class="park-name" x="153" y="90" font-size="38">Botanical</text><text class="park-name" x="178" y="126" font-size="38">Garden</text><text class="park-name" x="492" y="212" font-size="40">Pelham</text><text class="park-name" x="478" y="256" font-size="40">Bay Park</text><text class="area" x="232" y="356" font-size="27">THE BRONX</text><text class="area" x="415" y="518" font-size="31">THROGS NECK</text><text class="area" x="292" y="712" font-size="31">COLLEGE POINT</text><text class="area" x="368" y="827" font-size="31">FLUSHING</text><text class="area" x="695" y="882" font-size="32">BAYSIDE</text><text class="park-name" x="330" y="953" font-size="40">Flushing</text><text class="park-name" x="317" y="998" font-size="40">Meadows</text><text class="park-name" x="300" y="1041" font-size="40">Corona Park</text>
<text class="sea" font-size="28" transform="translate(122 660) rotate(38)">East River</text><text class="label" x="880" y="318" font-size="38">Sands Point</text><text class="label" x="895" y="370" font-size="38">Manorhaven</text><text class="label" x="1041" y="459" font-size="38">Port</text><text class="label" x="976" y="496" font-size="38">Washington</text><text class="label" x="976" y="646" font-size="38">Manhasset</text><text class="label" x="922" y="814" font-size="38">Lake Success</text><text class="label" x="955" y="1095" font-size="38">Floral Park</text>
<g class="interstate"><path d="M230 458h44q5 28-22 38-27-10-22-38zM602 556h64q5 32-32 42-37-10-32-42zM445 612h58q5 28-29 36-34-8-29-36z"/></g><g class="interstate-top"><path d="M602 549h64v9h-64zM441 605h66v8h-66z"/></g><g class="interstate-text"><text x="250" y="486">78</text><text x="634" y="588">295</text><text x="474" y="641">678</text></g>
<g class="shield"><rect x="930" y="724" width="68" height="42" rx="20"/></g><g class="shield-text"><text x="964" y="755">25A</text><text x="1052" y="1001">25B</text></g></g>
<g transform="translate(1080 1047)"><text class="area" x="580" y="110" font-size="31">JAMAICA</text><text class="area" x="118" y="375" font-size="31">EAST NEW</text><text class="place" x="632" y="226" font-size="40">John F.</text><text class="place" x="580" y="314" font-size="40">International</text><text class="place" x="640" y="361" font-size="40">Airport</text><text class="shield-text" x="278" y="320">27</text>
<path class="taxiway" d="M575 370l10 50 40 30 60-10-10-50-35-20"/><path class="airport-pin" d="M707 463q-6-28-22-38a31 31 0 1 1 44 0q-16 10-22 38z"/><path class="pin-glyph" d="M704 388q3-6 6 0v14l17 10v5l-17-5v11l5 5v3l-8-2-8 2v-3l5-5v-11l-17 5v-5l17-10z"/></g>
<g transform="translate(-60 1047)"><text class="area" x="990" y="748" font-size="30">HEEPSHEAD</text><text class="area" x="1036" y="777" font-size="30">BAY</text><text class="area" x="128" y="857" font-size="30">ISLAND</text><text class="area" x="902" y="302" font-size="30">SLOPE</text><text class="area" x="1040" y="252" font-size="30">OKLYN</text></g>
</svg>

<div class="intro">
<h1 class="title">Hooking Up in Your Hood</h1>
<p class="question">Are you thinking about hooking up in your hood?</p>
<p class="lead">Use our web app to</p>
<ul class="steps">
<li class="step level-1">see how common HIV is <span class="fact">(1 in 7 people don't know they have it!)</span></li>
<li class="step level-2">locate condom distribution points</li>
<li class="step level-3">watch informative videos about protecting yourself and loved ones</li>
<li class="step level-4">find places that do free testing</li>
</ul>
<form class="zip-form">
<input class="zip-input" type="text" name="zip" placeholder="Enter Zip Code" aria-label="Enter Zip Code">
<button class="zip-submit" type="submit">Submit</button>
</form>
</div>
</header>

<section class="cases">
<h2 class="heading">Number of HIV cases</h2>
<div class="sketch">
<table class="cases-table">
<thead><tr><th scope="col">Neighborhood</th><th scope="col">Number of HIV Cases</th></tr></thead>
<tbody><tr><td>Neighborhood name</td><td class="count">[XX]</td></tr></tbody>
</table>
<svg class="sketch-lines" viewBox="0 0 1844 198" preserveAspectRatio="none" aria-hidden="true">
<path d="M0 1L300 1 800 0 1844 1 1840 3 900 3 300 3 4 3zM0 195L300 194 900 193 1840 194 1844 196 900 196 0 196z"/>
<path d="M0 0h1L3 100 1 198 0 198zM1843 0h1v198h-1L1841 100zM957 0h2v198h-2L956 100z"/>
</svg>
</div>
</section>

<section class="condoms">
<h2 class="heading">Free Condom Distribution Points</h2>
<div class="cards">
<article class="card"><div class="card-head"><h3>Get Your Condoms Site 1</h3><span class="badge">Bronx</span></div><p>123 Main Street</p><p class="locality"><span>Bronx</span><span>NY</span><span>10453</span></p></article>
<article class="card"><div class="card-head"><h3>Get Your Condoms Site 2</h3><span class="badge">Williamsburg</span></div><p>125 Some Street</p><p class="locality"><span>Brooklyn</span><span>NY</span><span>11211</span></p></article>
<article class="card"><div class="card-head"><h3>Get Your Condoms Site 3</h3><span class="badge">Harlem</span></div><p>543 Pretty Street</p><p class="locality"><span>New York</span><span>NY</span><span>10037</span></p></article>
<article class="card"><div class="card-head"><h3>Get Your Condoms Site 4</h3><span class="badge">Jackson Heights</span></div><p>897 Neighbor Street</p><p class="locality"><span>Jackson Heights</span><span>NY</span><span>11372</span></p></article>
<article class="card"><div class="card-head"><h3>Get Your Condoms Site 5</h3><span class="badge">Long Island City</span></div><p>765 Cute Street</p><p class="locality"><span>Long Island City</span><span>NY</span><span>11103</span></p></article>
<article class="card"><div class="card-head"><h3>Get Your Condoms Site 6</h3><span class="badge">Lower East Side</span></div><p>298 Bougie Street</p><p class="locality"><span>New York</span><span>NY</span><span>10002</span></p></article>
</div>
</section>

<main class="lower">
<section class="playlists">
<h2 class="heading">Playlists</h2>
<div class="videos">
<svg class="video" viewBox="0 0 544 438" role="img" aria-label="Video player">
<defs><g id="player">
<path class="frame" d="M1 1L543 2 542 437 1 437zM1 390H543"/>
<g class="ink" transform="translate(-18 320) scale(.3827 .3333)">
<path class="solid-ink" d="M143 168L184 192V187L560 187 1180 186V192L800 195 560 198 545 202 592 202V303L850 302 1238 307V313H184V236L143 259z"/>
<path d="M73 97L200 98 271 101 270 186M73 97L74 328 200 324 268 329"/>
<path d="M1181 193H1222L1271 131 1274 322 1222 269H1181z"/><path class="fine-ink" d="M1237 195V300"/>
<path d="M1297 181Q1325 215 1300 266M1315 149Q1372 220 1317 305M1340 208L1388 211 1385 230 1391 260Q1362 252 1340 260"/>
<path d="M1331 203L1287 150M1310 149H1286L1290 174M1392 202Q1410 175 1438 150M1416 149H1440V176M1332 268L1287 317M1284 290V317H1308M1398 265Q1412 290 1442 319M1420 321H1443V293"/>
</g></g></defs>
<use href="#player"/>
</svg>
<svg class="video" viewBox="0 0 544 438" role="img" aria-label="Video player"><use href="#player"/></svg>
<svg class="video" viewBox="0 0 544 438" role="img" aria-label="Video player"><use href="#player"/></svg>
</div>
</section>

<section class="clinics">
<h2 class="heading">Clinics or Free Testing Sites</h2>
<div class="cards">
<article class="card"><div class="card-head"><h3>Testing Site 1</h3><span class="badge">Bronx</span></div><p>123 Main Street</p><p class="locality"><span>Bronx</span><span>NY</span><span>10453</span></p></article>
<article class="card"><div class="card-head"><h3>Testing Site 2</h3><span class="badge">Williamsburg</span></div><p>125 Some Street</p><p class="locality"><span>Brooklyn</span><span>NY</span><span>11211</span></p></article>
<article class="card"><div class="card-head"><h3>Testing Site 3</h3><span class="badge">Harlem</span></div><p>543 Pretty Street</p><p class="locality"><span>New York</span><span>NY</span><span>10037</span></p></article>
<article class="card"><div class="card-head"><h3>Testing Site 4</h3><span class="badge">Jackson Heights</span></div><p>897 Neighbor Street</p><p class="locality"><span>Jackson Heights</span><span>NY</span><span>11372</span></p></article>
<article class="card"><div class="card-head"><h3>Testing Site 5</h3><span class="badge">Long Island City</span></div><p>765 Cute Street</p><p class="locality"><span>Long Island City</span><span>NY</span><span>11103</span></p></article>
<article class="card"><div class="card-head"><h3>Testing Site 6</h3><span class="badge">Lower East Side</span></div><p>298 Bougie Street</p><p class="locality"><span>New York</span><span>NY</span><span>10002</span></p></article>
</div>
</section>
</main>
</body>
</html>
```
FILE: styles.css
```
* { box-sizing: border-box; }
body { margin: 0; background: #fefefe; color: #333; font: 28px/32px "Open Sans", "Noto Sans", sans-serif; }
h1, h2, h3, p, ul { margin: 0; padding: 0; font-weight: 400; }

/* Hero */
.hero { display: grid; grid-template-columns: 720fr 1086fr; column-gap: 64px; padding: 21px 122px 0 60px; }
.map { display: block; width: 100%; }
.intro { display: flex; flex-direction: column; min-width: 0; padding-top: 6px; }
.title { display: flex; justify-content: center; padding-left: 4px; font-size: 93px; line-height: 96px; white-space: nowrap; }
.question { margin-top: 48px; padding-right: 22px; font-size: 34px; line-height: 48px; font-weight: 700; text-align: center; color: #666; }
.lead { margin-top: 43px; padding-left: 14px; font-size: 36px; line-height: 48px; }
.steps { display: grid; gap: 22px; margin-top: 16px; list-style: none; color: #666; }
.step { display: flex; align-items: center; gap: 40px; white-space: nowrap; }
.step::before { content: ""; width: 20px; height: 20px; margin-top: 6px; border-radius: 50%; background: #d8d8d8; }
.level-1 { padding-left: 22px; }
.level-2 { padding-left: 50px; }
.level-3 { padding-left: 82px; gap: 50px; }
.level-4 { padding-left: 118px; }
.fact { margin-left: -20px; }
.fact, .count { color: #5f9516; }
.zip-form { display: grid; grid-template-columns: 484fr 418fr; gap: 64px; margin-top: auto; padding: 41px 60px; background: #d8d8d8; }
.zip-input, .zip-submit { height: 90px; min-width: 0; border: 0; border-radius: 3px; font-family: inherit; }
.zip-input { padding: 0 22px; background: #fff; font-size: 28px; color: #333; }
.zip-input::placeholder { color: #b0b0b0; opacity: 1; }
.zip-submit { height: 86px; background: #b0b0b0; color: #fff; font-size: 27px; }

.heading { font-size: 69px; line-height: 64px; }

/* Case counts */
.cases { padding: 139px 122px 14px 82px; border-left: 2px solid #eee; }
.cases .heading { padding-left: 12px; }
.sketch { position: relative; margin-top: 43px; }
.cases-table { width: 100%; table-layout: fixed; border-collapse: collapse; font-size: 25px; line-height: 36px; text-align: center; }
.cases-table th { height: 86px; padding: 0 140px 0 0; background: #e9eaee; font-weight: 400; }
.cases-table th:first-child { width: 52%; }
.cases-table td { height: 112px; padding: 25px 140px 0 0; vertical-align: top; }
.cases-table th:first-child, .cases-table td:first-child { padding-right: 120px; }
.sketch-lines { position: absolute; inset: 0; width: 100%; height: 100%; fill: #aeb3b7; }

/* Site cards */
.condoms { padding: 126px 134px 124px 84px; border-right: 8px solid #eee; border-bottom: 2px solid #eee; }
.condoms .heading { padding-left: 4px; }
.cards { display: grid; grid-template-columns: 1fr 1fr; gap: 11px 10px; margin-top: 46px; font: 27px/40px "Liberation Sans", Arial, sans-serif; color: #000; }
.card { padding: 9px 30px 3px; border: 2px solid #ddd; }
.card-head { display: grid; grid-template-columns: 538fr 306fr; margin-bottom: 11px; }
.card h3 { font-size: 27px; font-weight: 700; }
.badge { background: #d8d8d8; }
.locality { display: grid; grid-template-columns: 261fr 134fr 449fr; margin-top: 16px; }

/* Playlists */
.lower { border-right: 4px solid #eee; }
.playlists { padding: 0 124px 0 78px; }
.playlists .heading { padding-left: 14px; }
.videos { display: flex; margin-top: 29px; }
.video { flex: 1; min-width: 0; overflow: visible; }
.video:nth-child(1) { margin-right: 100px; }
.video:nth-child(2) { margin-right: 114px; }
.frame { fill: none; stroke: #b6babd; stroke-width: 2; }
.ink { fill: none; stroke: #82878b; stroke-width: 8; }
.solid-ink { fill: #82878b; stroke: none; }
.fine-ink { stroke-width: 3; }

/* Clinics */
.clinics { padding: 130px 133px 61px 102px; }
.clinics .heading { padding-left: 2px; }
.clinics .cards { row-gap: 10px; margin-top: 71px; }
.clinics .card { padding: 16px 30px 37px; }
.clinics .card-head { grid-template-columns: 488fr 352fr; }
.clinics .badge { text-align: center; }
.clinics .locality { grid-template-columns: 348fr 162fr 330fr; margin-top: 14px; }

/* Map */
.map text { font-family: Roboto, "Liberation Sans", sans-serif; }
.water { fill: #9bd7fd; }
.land { fill: #e5e5e5; }
.park { fill: #c3e8c8; }
.street { fill: none; stroke: #fff; stroke-width: 4; }
.road { fill: none; stroke: #fbd98d; stroke-width: 11; stroke-linejoin: round; stroke-linecap: round; }
.ferry { fill: none; stroke: #7fa9c4; stroke-width: 3; stroke-dasharray: 8 6; }
.label, .city, .area, .place, .park-name, .road-name { paint-order: stroke; stroke: #fff; stroke-width: 5; stroke-opacity: .8; }
.label { fill: #6d7176; }
.city { fill: #46494d; font-weight: 500; }
.area { fill: #8791a0; fill-opacity: .8; stroke-opacity: .15; }
.strong { font-weight: 500; }
.place { fill: #128c96; }
.park-name { fill: #288c50; stroke-opacity: .3; }
.road-name { fill: #9a5f35; }
.sea { fill: #4f86b5; }
.shield { fill: #fff; stroke: #777; stroke-width: 3; }
.shield-text { fill: #555; font-size: 28px; font-weight: 500; text-anchor: middle; }
.interstate { fill: #3479be; }
.interstate-top { fill: #d64545; }
.interstate-text { fill: #fff; font-size: 28px; font-weight: 500; text-anchor: middle; }
.place-pin { fill: #12a5b5; }
.airport-pin { fill: #1695c0; }
.pin-glyph { fill: #fff; }
.taxiway { fill: none; stroke: #d8c48c; stroke-width: 14; stroke-opacity: .7; }
.zones { stroke-linejoin: round; }
.zones path, .zones circle { fill: currentColor; fill-opacity: .4; stroke: currentColor; stroke-width: 22; }
.zones .solid { fill-opacity: .9; stroke-width: 10; }
.zones .narrow { stroke-width: 14; }
.zones .thin { fill: none; stroke: #111; stroke-width: 5; }
.orange { color: #fb6d20; }
.amber { color: #ff9d33; }
.gold { color: #ffcb2f; }
.gold-soft { color: #ffd27a; }
.yellow { color: #ffe13b; }
.red { color: #ff4050; }
.salmon { color: #f39090; }
.redorange { color: #ea4015; }
.darkred { color: #a01b1b; }
.crimson { color: #c2184f; }
.maroon { color: #7f1049; }
.pink { color: #f780a8; }
.purple { color: #8e24a5; }
.lavender { color: #c987d6; }
.indigo { color: #5c36aa; }
.periwinkle { color: #8c9bd2; }
.navy { color: #0d2470; }
.royal { color: #263f9e; }
.blue { color: #00508c; }
.skyblue { color: #0881c9; }
.teal { color: #008c99; }
.darkteal { color: #00555a; }
.seafoam { color: #74c5a0; }
.mint { color: #c4e29c; }
.green { color: #00965a; }
.darkgreen { color: #00612f; }
.forest { color: #478030; }
.lime { color: #6da83a; }
.khaki { color: #a5a63a; }
.olive { color: #786a23; }
.brown { color: #6f4c42; }
.darkbrown { color: #4a3330; }
.silver { color: #b5b5b5; }
.gray { color: #666; }
.charcoal { color: #404040; }
.black { color: #000; }
```
